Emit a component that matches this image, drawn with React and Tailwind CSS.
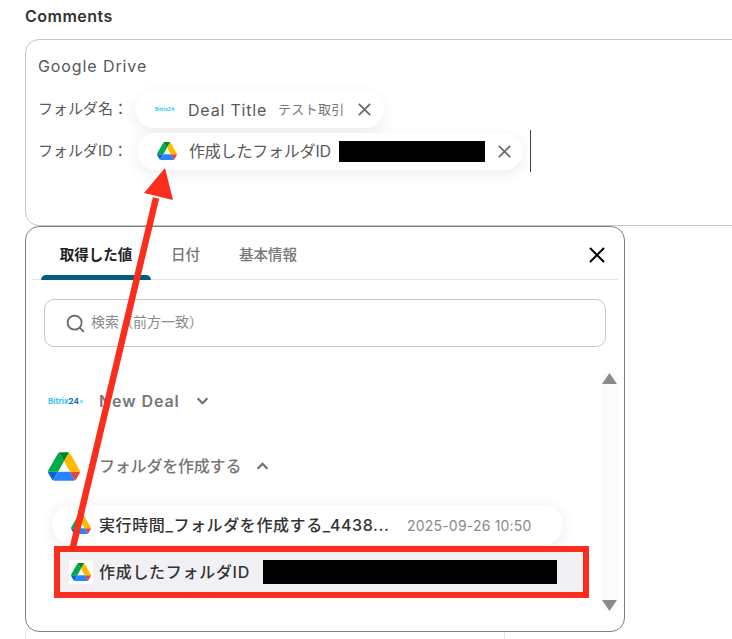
import { Search } from 'lucide-react';

function DriveIcon({ className }) {
  return (
    <svg viewBox="0 0 87.3 78" className={className}>
      <path d="m6.6 66.85 3.85 6.65c.8 1.4 1.95 2.5 3.3 3.3l13.75-23.8h-27.5c0 1.55.4 3.1 1.2 4.5z" fill="#0066da" />
      <path d="m43.65 25-13.75-23.8c-1.35.8-2.5 1.9-3.3 3.3l-25.4 44a9.06 9.06 0 0 0 -1.2 4.5h27.5z" fill="#00ac47" />
      <path d="m73.55 76.8c1.35-.8 2.5-1.9 3.3-3.3l1.6-2.75 7.65-13.25c.8-1.4 1.2-2.95 1.2-4.5h-27.502l5.852 11.5z" fill="#ea4335" />
      <path d="m43.65 25 13.75-23.8c-1.35-.8-2.9-1.2-4.5-1.2h-18.5c-1.6 0-3.15.45-4.5 1.2z" fill="#00832d" />
      <path d="m59.8 53h-32.3l-13.75 23.8c1.35.8 2.9 1.2 4.5 1.2h50.8c1.6 0 3.15-.45 4.5-1.2z" fill="#2684fc" />
      <path d="m73.4 26.5-12.7-22c-.8-1.4-1.95-2.5-3.3-3.3l-13.75 23.8 16.15 28h27.45c0-1.55-.4-3.1-1.2-4.5z" fill="#ffba00" />
    </svg>
  );
}

function Cross({ className, width = 2 }) {
  return (
    <svg viewBox="0 0 16 16" fill="none" stroke="currentColor" strokeWidth={width} className={className}>
      <path d="M1 1 15 15M15 1 1 15" />
    </svg>
  );
}

function Chevron({ up }) {
  return (
    <svg viewBox="0 0 14 9" fill="none" stroke="#6f6f6f" strokeWidth="2.4" className="w-[13px] h-[8px]">
      <path d={up ? 'M1.5 7.5 7 2l5.5 5.5' : 'M1.5 1.5 7 7l5.5-5.5'} />
    </svg>
  );
}

function Triangle({ down }) {
  return (
    <svg viewBox="0 0 15 12" className="w-[15px] h-[12px]" fill="#8a8a8a">
      <path d={down ? 'M0 1h15L7.5 12z' : 'M7.5 0 15 11H0z'} />
    </svg>
  );
}

export default function App() {
  return (
    <div className="relative w-[732px] h-[639px] overflow-hidden bg-white font-['Inter','Noto_Sans_CJK_JP',sans-serif]">
      <div className="pl-[25px] pt-[7px] text-[16px] leading-[18px] font-semibold tracking-[0.5px] text-[#333]">Comments</div>

      {/* comment field */}
      <div className="mt-[14px] ml-[25px] w-[760px] h-[187px] border border-[#c6c6c6] rounded-[14px] pl-[12px] pt-[15px] text-[16px] text-[#595959]">
        <div className="h-[22px] leading-[22px] tracking-[0.9px]">Google Drive</div>
        <div className="flex items-center mt-[14px]">
          <span className="w-[97px] text-[15px]">フォルダ名：</span>
          <div className="flex items-center w-[249px] h-[37px] rounded-full bg-white shadow-[0_4px_14px_rgba(60,50,90,0.09)] pl-[20px]">
            <span className="w-[22px] text-[5px] leading-none font-bold text-[#2fc6f6] whitespace-nowrap">Bitrix24</span>
            <span className="ml-[11px] tracking-[0.8px]">Deal Title</span>
            <span className="ml-[11px] text-[13px] tracking-[0.3px] text-[#777] whitespace-nowrap">テスト取引</span>
            <Cross className="ml-[13px] w-[13px] h-[13px] text-[#666]" />
          </div>
        </div>
        <div className="flex items-center mt-[2px]">
          <span className="w-[99px] text-[15px]">フォルダID：</span>
          <div className="flex items-center w-[386px] h-[37px] rounded-full bg-white shadow-[0_4px_14px_rgba(60,50,90,0.09)] pl-[20px]">
            <DriveIcon className="w-[20px] h-[18px]" />
            <span className="ml-[12px] w-[150px] tracking-[-0.2px] whitespace-nowrap">作成したフォルダID</span>
            <div className="w-[146px] h-[21px] bg-black" />
            <Cross className="ml-[13px] w-[13px] h-[13px] text-[#666]" />
          </div>
          <div className="ml-[7px] w-[1px] h-[42px] bg-[#444]" />
        </div>
      </div>

      {/* value picker */}
      <div className="relative z-10 ml-[25px] w-[600px] h-[406px] border border-[#808080] rounded-[14px] bg-white">
        <div className="flex mx-[6px] h-[53px] border-b border-[#e4e4e4] text-[14.5px] font-medium">
          <div className="relative ml-[9px] w-[110px] flex items-center justify-center pt-[4px] font-bold text-[#222]">
            取得した値
            <div className="absolute left-0 right-0 -bottom-px h-[5px] rounded-t-[5px] bg-[#045d7e]" />
          </div>
          <div className="ml-[20px] flex items-center pt-[4px] text-[#777]">日付</div>
          <div className="ml-[39px] flex items-center pt-[4px] text-[#777]">基本情報</div>
          <Cross className="ml-auto mr-[13px] mt-[20px] w-[16px] h-[16px] text-black" />
        </div>

        <div className="flex items-center ml-[18px] mt-[19px] w-[562px] h-[48px] border border-[#c6c6c6] rounded-[10px] pl-[20px] text-[14px] text-[#8a8a8a]">
          <Search size={21} strokeWidth={2} className="text-[#666]" />
          <span className="ml-[5px] pb-[3px]">検索（前方一致）</span>
        </div>

        <div className="flex">
          <div className="w-[575px] text-[16px]">
            <div className="flex items-center h-[30px] mt-[39px] pl-[22px]">
              <span className="flex items-center w-[32px] text-[8px] font-bold text-[#2fc6f6] whitespace-nowrap">
                Bitrix<span className="text-[#0b66c3]">24</span>
                <span className="ml-px w-[3px] h-[3px] shrink-0 rounded-full border-[0.5px] border-[#2fc6f6]" />
              </span>
              <span className="ml-[19px] font-semibold text-[#777] tracking-[0.9px]">New Deal</span>
              <span className="ml-[16px]"><Chevron /></span>
            </div>
            <div className="flex items-center h-[30px] mt-[35px] pl-[22px]">
              <DriveIcon className="w-[32px] h-[29px]" />
              <span className="ml-[19px] font-medium tracking-[-0.2px] text-[#777]">フォルダを作成する</span>
              <span className="ml-[15px]"><Chevron up /></span>
            </div>
            <div className="flex items-center ml-[26px] mt-[24px] w-[511px] h-[40px] rounded-full bg-white shadow-[0_2px_14px_rgba(60,50,90,0.1)] pl-[19px]">
              <DriveIcon className="w-[20px] h-[18px]" />
              <span className="ml-[8px] w-[308px] font-medium tracking-[0.6px] text-[#333] whitespace-nowrap">実行時間_フォルダを作成する_4438...</span>
              <span className="text-[14px] tracking-[0.2px] text-[#8a8a8a]">2025-09-26 10:50</span>
            </div>
            <div className="ml-[28px] mt-px w-[535px] h-[52px] border-[6px] border-[#fb2d1c] bg-[#f1f0f5]">
              <div className="flex items-center h-full pl-[9px]">
                <div className="flex items-center justify-center w-[24px] h-[24px] bg-white">
                  <DriveIcon className="w-[20px] h-[18px]" />
                </div>
                <span className="ml-[6px] w-[164px] font-medium tracking-[0.7px] text-[#333] whitespace-nowrap">作成したフォルダID</span>
                <div className="w-[294px] h-[24px] bg-black" />
              </div>
            </div>
          </div>
          <div className="flex flex-col items-center justify-between mt-[26px] w-[17px] h-[238px] bg-[#fbfafd]">
            <Triangle />
            <Triangle down />
          </div>
        </div>
      </div>

      {/* next field, mostly behind the picker */}
      <div className="-mt-[10px] ml-[25px] w-[480px] h-[30px] border-l border-r border-[#e4e4e4] rounded-t-[14px]" />

      {/* annotation arrow */}
      <svg className="absolute inset-0 z-20 pointer-events-none" width="732" height="639" viewBox="0 0 732 639">
        <path d="M73 547 156 198" stroke="#fb2d1c" strokeWidth="6.5" fill="none" />
        <path d="M165 168 144 193 173 200z" fill="#fb2d1c" />
      </svg>
    </div>
  );
}
